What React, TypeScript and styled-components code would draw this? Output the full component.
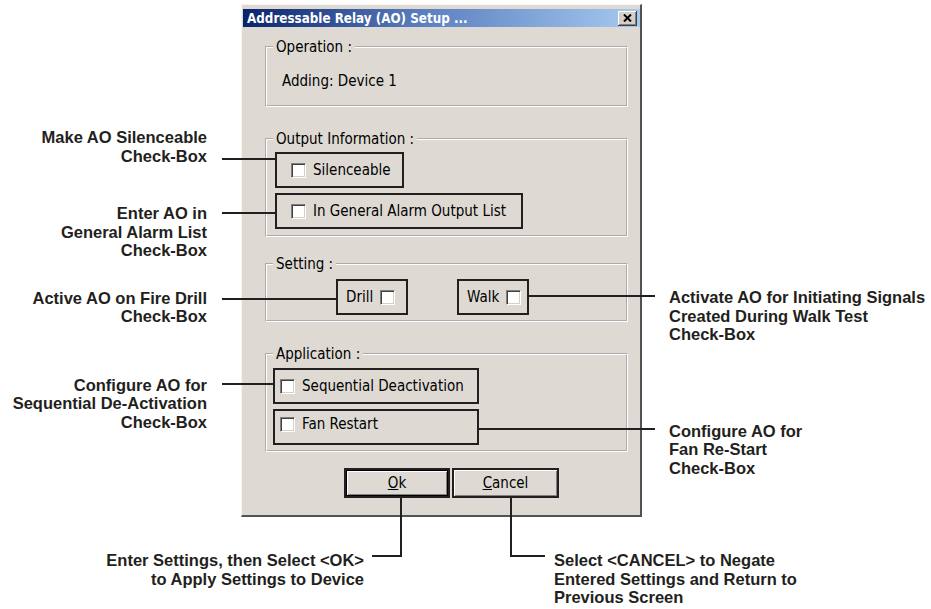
import React from 'react';
import styled, { createGlobalStyle } from 'styled-components';

const ink = '#231f20';
const dialogFont = `"DejaVu Sans Condensed", "DejaVu Sans", sans-serif`;

const GlobalStyle = createGlobalStyle`
  html, body {
    margin: 0;
    padding: 0;
    background: #ffffff;
  }
  body {
    width: 931px;
    height: 609px;
    overflow: hidden;
  }
`;

const Page = styled.div`
  display: grid;
  grid-template-columns: 241px 401px 1fr;
  grid-template-rows: 519px 1fr;
  width: 931px;
  height: 609px;
  font-family: "Liberation Sans", Arial, sans-serif;
  color: ${ink};
`;

// left-hand notes hug the dialog, so they are right aligned
const SideNotes = styled.div<{ $side: 'left' | 'right' }>`
  display: flex;
  flex-direction: column;
  align-items: ${p => (p.$side === 'left' ? 'flex-end' : 'flex-start')};
  padding: ${p => (p.$side === 'left' ? '0 34px 0 0' : '0 0 0 27px')};
  text-align: ${p => (p.$side === 'left' ? 'right' : 'left')};
`;

const Note = styled.div<{ $gap?: number; $align?: 'left' | 'right' }>`
  margin-top: ${p => p.$gap || 0}px;
  font-size: 16.5px;
  line-height: 18.5px;
  font-weight: bold;
  white-space: nowrap;
  text-align: ${p => p.$align || 'inherit'};
`;

const FooterNotes = styled.div`
  grid-column: 1 / -1;
  display: grid;
  grid-template-columns: 364px 1fr;
  column-gap: 190px;
  align-items: start;
  padding-top: 32px;
`;

const Window = styled.div`
  align-self: start;
  margin-top: 4px;
  display: flex;
  flex-direction: column;
  background: #dedad3;
  border-style: solid;
  border-width: 1px 2px 2px 1px;
  border-color: #f7f6f3 #4e5355 #4e5355 #f7f6f3;
  padding: 4px 0 17px;
  font-family: ${dialogFont};
  font-size: 15px;
  color: #000;
`;

const TitleBar = styled.div`
  height: 18px;
  margin-left: 1px;
  padding: 0 3px 0 4px;
  display: flex;
  align-items: center;
  justify-content: space-between;
  background: linear-gradient(to right, #0a246a 0%, #5a7fbf 45%, #a6caf0 100%);
  color: #ffffff;
  font-weight: bold;
  font-size: 13.3px;
  white-space: nowrap;
`;

const CloseButton = styled.div`
  width: 19px;
  height: 15px;
  display: flex;
  align-items: center;
  justify-content: center;
  box-sizing: border-box;
  background: #d4d0c8;
  box-shadow: inset -1px -1px #404040, inset 1px 1px #ffffff, inset -2px -2px #808080;
`;

const Body = styled.div`
  display: flex;
  flex-direction: column;
  padding: 13px 12px 0 23px;
`;

const Group = styled.fieldset<{ $mt: number }>`
  margin: ${p => p.$mt}px 0 0;
  padding: 0;
  min-width: 0;
  border: 2px groove #ffffff;
`;

const Legend = styled.legend`
  margin-left: 6px;
  padding: 0 3px;
  line-height: 14px;
  font-size: 15px;
`;

const GroupBody = styled.div<{ $pad: string; $row?: boolean; $gap?: number }>`
  display: flex;
  flex-direction: ${p => (p.$row ? 'row' : 'column')};
  gap: ${p => p.$gap || 0}px;
  padding: ${p => p.$pad};
`;

const Plain = styled.div`
  line-height: 14px;
  white-space: nowrap;
`;

type Leader = { side: 'left' | 'right'; y: number; len: number };

const Callout = styled.div<{ $w: number; $pad: number; $top?: boolean; $leader?: Leader }>`
  position: relative;
  box-sizing: border-box;
  width: ${p => p.$w}px;
  height: 36px;
  border: 2px solid ${ink};
  display: flex;
  align-items: ${p => (p.$top ? 'flex-start' : 'center')};
  gap: 7px;
  padding: ${p => (p.$top ? 6 : 0)}px 0 0 ${p => p.$pad}px;
  line-height: 14px;
  white-space: nowrap;

  &::before {
    content: '';
    display: ${p => (p.$leader ? 'block' : 'none')};
    position: absolute;
    top: ${p => (p.$leader ? p.$leader.y - 2 : 0)}px;
    ${p => (p.$leader && p.$leader.side === 'right' ? 'left: 100%;' : 'right: 100%;')}
    width: ${p => (p.$leader ? p.$leader.len : 0)}px;
    height: 2px;
    background: ${ink};
  }
`;

const Check = styled.input.attrs({ type: 'checkbox' })`
  appearance: none;
  margin: 0;
  flex: none;
  width: 15px;
  height: 15px;
  box-sizing: border-box;
  background: #ffffff;
  border: 1px solid;
  border-color: #808080 #ffffff #ffffff #808080;
  box-shadow: inset 1px 1px #404040, inset -1px -1px #d4d0c8;
`;

const ButtonRow = styled.div`
  display: flex;
  gap: 2px;
  margin: 16px 0 0 79px;
`;

type Drop = { dir: 'left' | 'right'; x: number; len: number };

const DialogButton = styled.button<{ $w: number; $default?: boolean; $drop: Drop }>`
  position: relative;
  width: ${p => p.$w}px;
  height: 30px;
  box-sizing: border-box;
  padding: 0;
  border: 2px solid ${ink};
  background: #dedad3;
  box-shadow: ${p =>
    p.$default
      ? 'inset 0 0 0 1px #000000, inset 2px 2px #ffffff, inset -2px -2px #808080'
      : 'inset 1px 1px #ffffff, inset -1px -1px #808080'};
  font-family: ${dialogFont};
  font-size: 15px;
  color: #000;

  &::after {
    content: '';
    position: absolute;
    top: 100%;
    left: ${p => p.$drop.x}px;
    width: ${p => p.$drop.len}px;
    height: 61px;
    box-sizing: border-box;
    border-bottom: 2px solid ${ink};
    ${p => (p.$drop.dir === 'left' ? `border-right: 2px solid ${ink};` : `border-left: 2px solid ${ink};`)}
  }
`;

const App: React.FC = () => {
  return (
    <Page>
      <GlobalStyle />
      <SideNotes $side="left">
        <Note $gap={128}>Make AO Silenceable<br />Check-Box</Note>
        <Note $gap={39}>Enter AO in<br />General Alarm List<br />Check-Box</Note>
        <Note $gap={29}>Active AO on Fire Drill<br />Check-Box</Note>
        <Note $gap={50}>Configure AO for<br />Sequential De-Activation<br />Check-Box</Note>
      </SideNotes>

      <Window>
        <TitleBar>
          <span>Addressable Relay (AO) Setup ...</span>
          <CloseButton>
            <svg width="9" height="8" viewBox="0 0 9 8">
              <path d="M1 0.5 L8 7.5 M8 0.5 L1 7.5" stroke="#000" strokeWidth="2" />
            </svg>
          </CloseButton>
        </TitleBar>
        <Body>
          <Group $mt={0}>
            <Legend>Operation :</Legend>
            <GroupBody $pad="20px 0 17px 15px">
              <Plain>Adding: Device 1</Plain>
            </GroupBody>
          </Group>

          <Group $mt={25}>
            <Legend>Output Information :</Legend>
            <GroupBody $pad="6px 0 6px 8px" $gap={5}>
              <Callout $w={129} $pad={14} $leader={{ side: 'left', y: 6, len: 55 }}>
                <Check />
                <span>Silenceable</span>
              </Callout>
              <Callout $w={248} $pad={14} $leader={{ side: 'left', y: 19, len: 55 }}>
                <Check />
                <span>In General Alarm Output List</span>
              </Callout>
            </GroupBody>
          </Group>

          <Group $mt={20}>
            <Legend>Setting :</Legend>
            <GroupBody $pad="8px 0 5px 69px" $row $gap={49}>
              <Callout $w={72} $pad={8} $leader={{ side: 'left', y: 19, len: 116 }}>
                <span>Drill</span>
                <Check />
              </Callout>
              <Callout $w={72} $pad={8} $leader={{ side: 'right', y: 16, len: 128 }}>
                <span>Walk</span>
                <Check />
              </Callout>
            </GroupBody>
          </Group>

          <Group $mt={25}>
            <Legend>Application :</Legend>
            <GroupBody $pad="7px 0 5px 6px" $gap={5}>
              <Callout $w={206} $pad={5} $leader={{ side: 'left', y: 15, len: 53 }}>
                <Check />
                <span>Sequential Deactivation</span>
              </Callout>
              <Callout $w={206} $pad={5} $top $leader={{ side: 'right', y: 19, len: 178 }}>
                <Check />
                <span>Fan Restart</span>
              </Callout>
            </GroupBody>
          </Group>

          <ButtonRow>
            <DialogButton $w={106} $default $drop={{ dir: 'left', x: 26, len: 30 }}>
              <u>O</u>k
            </DialogButton>
            <DialogButton $w={107} $drop={{ dir: 'right', x: 56, len: 35 }}>
              <u>C</u>ancel
            </DialogButton>
          </ButtonRow>
        </Body>
      </Window>

      <SideNotes $side="right">
        <Note $gap={288}>Activate AO for Initiating Signals<br />Created During Walk Test<br />Check-Box</Note>
        <Note $gap={78}>Configure AO for<br />Fan Re-Start<br />Check-Box</Note>
      </SideNotes>

      <FooterNotes>
        <Note $align="right">Enter Settings, then Select &lt;OK&gt;<br />to Apply Settings to Device</Note>
        <Note $align="left">Select &lt;CANCEL&gt; to Negate<br />Entered Settings and Return to<br />Previous Screen</Note>
      </FooterNotes>
    </Page>
  );
};

export default App;
